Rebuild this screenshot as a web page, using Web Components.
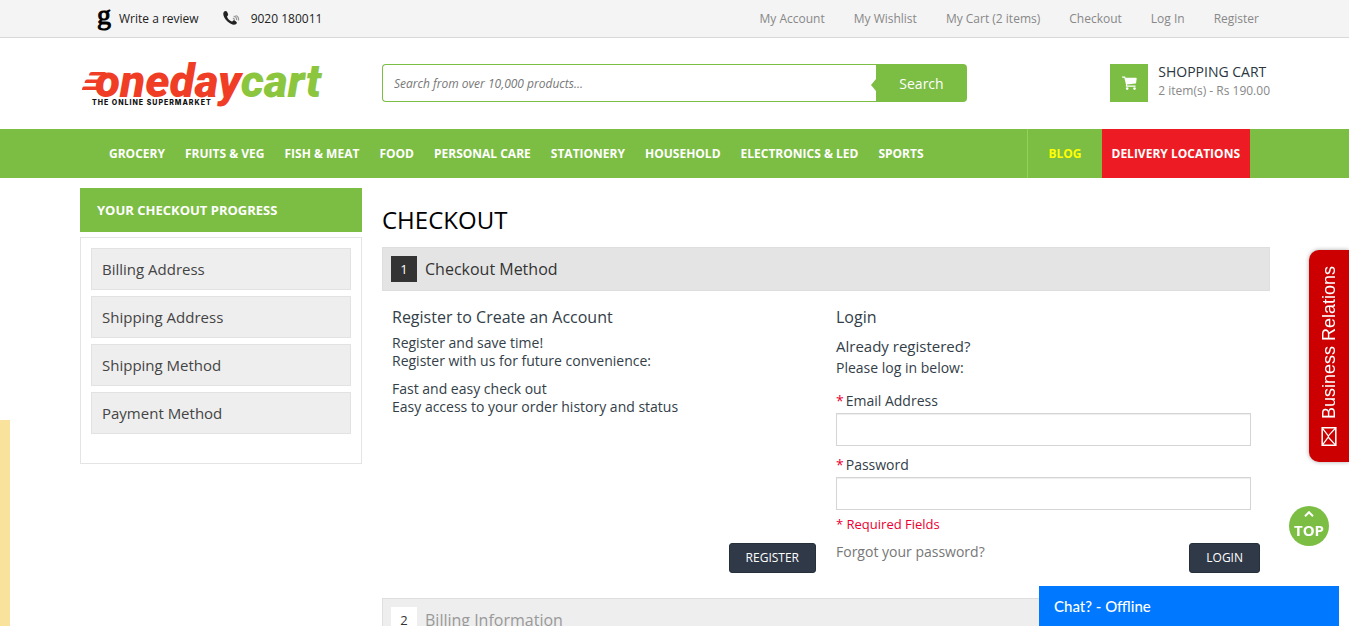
<!DOCTYPE html>
<html lang="en">
<head>
<meta charset="utf-8">
<meta name="viewport" content="width=device-width, initial-scale=1">
<title>Checkout - onedaycart</title>
<style>
:root {
  --green: #7cbd44;
  --line: #e0e0e0;
  --ink: #333e48;
  --muted: #888;
  --red: #ed1c24;
  --page: 1191px;
}
body {
  margin: 0;
  background: #fff;
  color: var(--ink);
  font: 14px/18px "Open Sans", "Noto Sans", sans-serif;
}
.columns {
  box-sizing: border-box;
  display: grid;
  grid-template-columns: 282px minmax(0, 1fr);
  gap: 20px;
  align-items: start;
  max-width: var(--page);
  margin: 10px auto 0;
  padding-left: 1px;
}
</style>
</head>
<body>
<top-bar></top-bar>
<site-header></site-header>
<site-nav></site-nav>
<main class="columns">
  <checkout-progress heading="Your Checkout Progress">
    <li>Billing Address</li>
    <li>Shipping Address</li>
    <li>Shipping Method</li>
    <li>Payment Method</li>
  </checkout-progress>
  <checkout-page heading="Checkout">
    <checkout-step number="1" heading="Checkout Method" active>
      <register-panel></register-panel>
      <login-panel></login-panel>
    </checkout-step>
    <checkout-step number="2" heading="Billing Information"></checkout-step>
  </checkout-page>
</main>
<side-strip></side-strip>
<side-tab>Business Relations</side-tab>
<back-to-top>TOP</back-to-top>
<chat-bar>Chat? - Offline</chat-bar>

<script>
const base = `
  *, :host { box-sizing: border-box; }
  a { color: inherit; text-decoration: none; }
  h1, h2, h3, p, ul { margin: 0; padding: 0; }
  h1, h2, h3 { font-weight: 400; }
  ul { list-style: none; }
  button, input { font-family: inherit; }
`;

function define(name, render) {
  customElements.define(name, class extends HTMLElement {
    constructor() {
      super();
      this.attachShadow({ mode: "open" });
    }
    connectedCallback() {
      const { css, html } = render(this);
      this.shadowRoot.innerHTML = `<style>${base}${css}</style>${html}`;
    }
  });
}

define("top-bar", () => ({
  css: `
    :host { display: block; background: #f4f4f4; border-bottom: 1px solid #d8d8d8; font-size: 12px; }
    .row { display: flex; justify-content: space-between; align-items: center; height: 37px; max-width: var(--page); margin: 0 auto; padding: 0 11px 0 18px; }
    .contact, ul { display: flex; align-items: center; }
    .contact { color: #222; gap: 24px; }
    .contact a { display: flex; align-items: center; gap: 10px; }
    .g { font: 28px/20px "Liberation Serif", serif; color: #000; -webkit-text-stroke: 1px #000; height: 28px; width: 12px; }
    ul { gap: 29px; color: var(--muted); }
  `,
  html: `
    <div class="row">
      <div class="contact">
        <a href="#"><span class="g" aria-hidden="true">g</span>Write a review</a>
        <a href="tel:9020180011">
          <svg width="18" height="16" viewBox="0 0 18 16" aria-hidden="true">
            <path d="M1 .7C2-.2 3.600-.1 4.200 1.100l.9 2.200c.2.900-.2 1.400-.9 1.800-.5.600.8 2.700 2.100 3.900 1.400 1.300 2.700 1.700 3.200 1.200.7-.9 1.400-1.100 2.300-.6l1.700 1.300c.7.700.4 1.700-.6 2.300-2 1.200-5.500.1-8.400-2.700C1.300 7.700-1 2.800 1 .7z" fill="#222"/>
            <path d="M9.800 7.500c1-.3 1.700.5 1.500 1.500M10.600 5.300c2-.1 3.400 1.700 3 3.900M12.600 4.500c2 .6 3.300 2.600 2.900 5" fill="none" stroke="#999" stroke-width="1.200"/>
          </svg>9020 180011</a>
      </div>
      <ul>
        <li><a href="#">My Account</a></li>
        <li><a href="#">My Wishlist</a></li>
        <li><a href="#">My Cart (2 items)</a></li>
        <li><a href="#">Checkout</a></li>
        <li><a href="#">Log In</a></li>
        <li><a href="#">Register</a></li>
      </ul>
    </div>`
}));

define("site-logo", () => ({
  css: `
    :host { display: block; }
    svg { display: block; overflow: visible; }
  `,
  html: `
    <a href="#" aria-label="onedaycart">
      <svg width="244" height="44" viewBox="0 0 244 44">
        <path d="M12 11h14l-3 3.500H9Q9 11 12 11zM7 18.500h15l-1 3.500H4.500Q5 18.500 7 18.500zM4 25.500h17l1 3.500H2Q2 25.500 4 25.500z" fill="#f03e26"/>
        <text x="15" y="36" font-family="Roboto, sans-serif" font-size="46" font-weight="900" font-style="italic" fill="#f03e26">oneday<tspan fill="#8bc63e">cart</tspan></text>
        <text x="12" y="44" font-family="Inter, sans-serif" font-size="7" font-weight="800" letter-spacing="1" fill="#111">THE ONLINE SUPERMARKET</text>
      </svg>
    </a>`
}));

define("search-box", () => ({
  css: `
    :host { display: block; flex: 0 1 585px; }
    form { display: flex; height: 38px; }
    input { flex: 1; min-width: 0; border: 1px solid var(--green); border-right: 0; border-radius: 4px 0 0 4px; padding: 0 11px; font-size: 12px; font-style: italic; color: #555; outline: 0; background: #fff; }
    input::placeholder { color: #777; opacity: 1; }
    button { position: relative; width: 91px; border: 0; border-radius: 0 4px 4px 0; background: var(--green); color: #fff; font-size: 14px; padding: 0; }
    button::before { content: ""; position: absolute; left: -5px; top: 15px; border: 6px solid transparent; border-left: 0; border-right: 5px solid var(--green); }
  `,
  html: `
    <form role="search" onsubmit="return false">
      <input type="search" aria-label="Search" placeholder="Search from over 10,000 products...">
      <button type="submit">Search</button>
    </form>`
}));

define("mini-cart", () => ({
  css: `
    :host { display: block; }
    a { display: flex; gap: 10px; align-items: flex-start; height: 38px; }
    .icon { display: grid; place-items: center; width: 38px; height: 38px; background: var(--green); }
    strong { display: block; font-weight: 500; font-size: 14px; line-height: 16px; color: #2b3640; }
    small { display: block; font-size: 12px; line-height: 22px; color: var(--muted); }
  `,
  html: `
    <a href="#">
      <span class="icon">
        <svg width="15" height="14" viewBox="0 0 15 14" fill="#fff" aria-hidden="true">
          <path d="M0 .5h2.700c.5 0 .7.500.8 1.300H14q.7 0 .7.700l-.6 4.400q-.1.600-.7.700L5 8.600l.2 1h8q.5 0 .5.600t-.5.600H4.300q-.7 0-.6-.7l.4-1L2.300 1.700H.5Q0 1.700 0 1z"/>
          <circle cx="5.200" cy="12.600" r="1.300"/><circle cx="12.500" cy="12.600" r="1.300"/>
        </svg>
      </span>
      <span><strong>SHOPPING CART</strong><small>2 item(s) - Rs 190.00</small></span>
    </a>`
}));

define("site-header", () => ({
  css: `
    :host { display: grid; grid-template-columns: 282px minmax(0, 1fr); gap: 20px; max-width: var(--page); margin: 0 auto; padding: 23px 0 24px 1px; align-items: center; }
    .right { display: flex; justify-content: space-between; align-items: center; gap: 20px; }
    site-logo { align-self: start; }
  `,
  html: `<site-logo></site-logo><div class="right"><search-box></search-box><mini-cart></mini-cart></div>`
}));

define("site-nav", () => ({
  css: `
    :host { display: block; background: var(--green); }
    nav { display: flex; justify-content: space-between; max-width: var(--page); margin: 0 auto; padding: 0 20px; font-size: 12px; font-weight: 700; line-height: 49px; color: #fff; white-space: nowrap; }
    ul { display: flex; }
    a { display: block; padding: 0 10px; }
    .blog { color: #ff0; border-left: 1px solid #93d15b; padding: 0 20px; }
    .delivery { background: var(--red); }
  `,
  html: `
    <nav>
      <ul>${["GROCERY", "FRUITS &amp; VEG", "FISH &amp; MEAT", "FOOD", "PERSONAL CARE", "STATIONERY", "HOUSEHOLD", "ELECTRONICS &amp; LED", "SPORTS"]
        .map(t => `<li><a href="#">${t}</a></li>`).join("")}</ul>
      <ul>
        <li><a class="blog" href="#">BLOG</a></li>
        <li><a class="delivery" href="#">DELIVERY LOCATIONS</a></li>
      </ul>
    </nav>`
}));

define("checkout-progress", el => ({
  css: `
    :host { display: block; }
    h2 { background: var(--green); color: #fff; font-size: 13px; font-weight: 700; line-height: 44px; padding: 0 17px; text-transform: uppercase; }
    ul { display: grid; gap: 6px; margin-top: 5px; padding: 10px 10px 29px; border: 1px solid #e4e4e4; }
    ::slotted(li) { list-style: none; background: #eee; border: 1px solid #e2e2e2; padding: 0 10px; font-size: 15px; line-height: 40px; color: #444; }
  `,
  html: `<h2>${el.getAttribute("heading")}</h2><ul><slot></slot></ul>`
}));

define("checkout-page", el => ({
  css: `
    :host { display: block; padding-top: 15px; }
    h1 { font-size: 24px; font-weight: 500; line-height: 34px; color: #000; text-transform: uppercase; margin-bottom: 10px; }
  `,
  html: `<h1>${el.getAttribute("heading")}</h1><slot></slot>`
}));

define("checkout-step", el => ({
  css: `
    :host { display: block; }
    h2 { display: flex; align-items: center; gap: 8px; height: 44px; padding: 0 8px; background: #eee; border: 1px solid #dedede; font-size: 16px; line-height: 26px; color: #999; }
    .num { flex: none; width: 26px; height: 26px; text-align: center; font-size: 13px; background: #fff; color: #333; }
    :host([active]) h2 { background: #e4e4e4; color: #333; }
    :host([active]) .num { background: #333; color: #fff; }
    .body { display: none; }
    :host([active]) .body { display: grid; grid-template-columns: repeat(2, minmax(0, 1fr)); padding: 16px 0 25px; }
    ::slotted(*) { padding: 0 10px; }
  `,
  html: `<h2><span class="num">${el.getAttribute("number")}</span>${el.getAttribute("heading")}</h2><div class="body"><slot></slot></div>`
}));

define("dark-button", () => ({
  css: `
    :host { display: inline-block; }
    button { display: block; height: 30px; padding: 0 16px; border: 1px solid #26303b; border-radius: 3px; background: #2f3948; color: #fff; font-size: 12px; line-height: 28px; }
  `,
  html: `<button type="button"><slot></slot></button>`
}));

define("register-panel", () => ({
  css: `
    :host { display: flex; flex-direction: column; }
    h3 { font-size: 16px; line-height: 20px; margin-bottom: 7px; }
    p { margin-bottom: 10px; }
    dark-button { margin-top: auto; align-self: flex-end; }
  `,
  html: `
    <h3>Register to Create an Account</h3>
    <p>Register and save time!<br>Register with us for future convenience:</p>
    <p>Fast and easy check out<br>Easy access to your order history and status</p>
    <dark-button>REGISTER</dark-button>`
}));

define("text-field", el => ({
  css: `
    :host { display: block; }
    label { display: block; line-height: 24px; }
    em { color: #eb0030; font-style: normal; padding-right: 2px; }
    input { display: block; width: calc(100% - 9px); height: 33px; border: 1px solid #d5d5d5; box-shadow: inset 0 1px 1px #eee; padding: 0 8px; font-size: 14px; background: #fff; }
  `,
  html: `<label for="field"><em>*</em>${el.getAttribute("label")}</label><input id="field" type="${el.getAttribute("type")}" required>`
}));

define("login-panel", () => ({
  css: `
    :host { display: block; }
    h3 { font-size: 16px; line-height: 20px; margin-bottom: 8px; }
    h4 { font-size: 15px; font-weight: 400; line-height: 22px; margin: 0; }
    p { line-height: 20px; margin: 1px 0 11px; }
    text-field + text-field { margin-top: 7px; }
    .required { font-size: 13px; color: #eb0030; line-height: 18px; margin: 5px 0 10px; }
    .actions { display: flex; justify-content: space-between; align-items: flex-start; line-height: 18px; }
    .actions a { color: #777; }
  `,
  html: `
    <h3>Login</h3>
    <form>
      <h4>Already registered?</h4>
      <p>Please log in below:</p>
      <text-field label="Email Address" type="email"></text-field>
      <text-field label="Password" type="password"></text-field>
      <p class="required">* Required Fields</p>
      <div class="actions"><a href="#">Forgot your password?</a><dark-button>LOGIN</dark-button></div>
    </form>`
}));

define("side-strip", () => ({
  css: `:host { position: fixed; left: 0; top: 420px; bottom: 0; width: 10px; background: #f9e29c; }`,
  html: ``
}));

define("side-tab", () => ({
  css: `
    :host { position: fixed; right: 0; top: 250px; }
    a { display: flex; align-items: center; gap: 8px; width: 40px; height: 212px; padding: 16px 0; writing-mode: vertical-rl; transform: rotate(180deg); background: #c00; color: #fff; border-radius: 0 10px 10px 0; box-shadow: 0 0 4px #aaa; font: 18px/20px "Liberation Sans", Arial, sans-serif; white-space: nowrap; }
  `,
  html: `
    <a href="#">
      <svg width="16" height="20" viewBox="0 0 16 20" fill="none" stroke="#fff" stroke-width="1.300" aria-hidden="true">
        <path d="M.8.800h14.400v18.400H.8z" stroke-width="1.600"/><path d="M1 1l7 7.500q1.500 1.500 0 3L1 19M15 1L9 9M15 19l-6-8"/>
      </svg>
      <slot></slot>
    </a>`
}));

define("back-to-top", () => ({
  css: `
    :host { position: fixed; right: 20px; bottom: 80px; }
    button { display: flex; flex-direction: column; align-items: center; width: 40px; height: 40px; padding: 5px 0 0; border: 0; border-radius: 50%; background: var(--green); color: #fff; font-size: 15px; font-weight: 700; line-height: 26px; }
    svg { flex: none; }
  `,
  html: `
    <button type="button">
      <svg width="10" height="6" viewBox="0 0 10 6" aria-hidden="true"><path d="M1 5.200l4-4 4 4" fill="none" stroke="#fff" stroke-width="2"/></svg>
      <slot></slot>
    </button>`
}));

define("chat-bar", () => ({
  css: `
    :host { position: fixed; right: 10px; bottom: 0; width: 300px; }
    button { display: block; width: 100%; height: 40px; padding: 0 15px; border: 0; background: #0078ff; color: #fff; font: 500 15px/40px Lato, sans-serif; text-align: left; }
  `,
  html: `<button type="button"><slot></slot></button>`
}));
</script>
</body>
</html>
